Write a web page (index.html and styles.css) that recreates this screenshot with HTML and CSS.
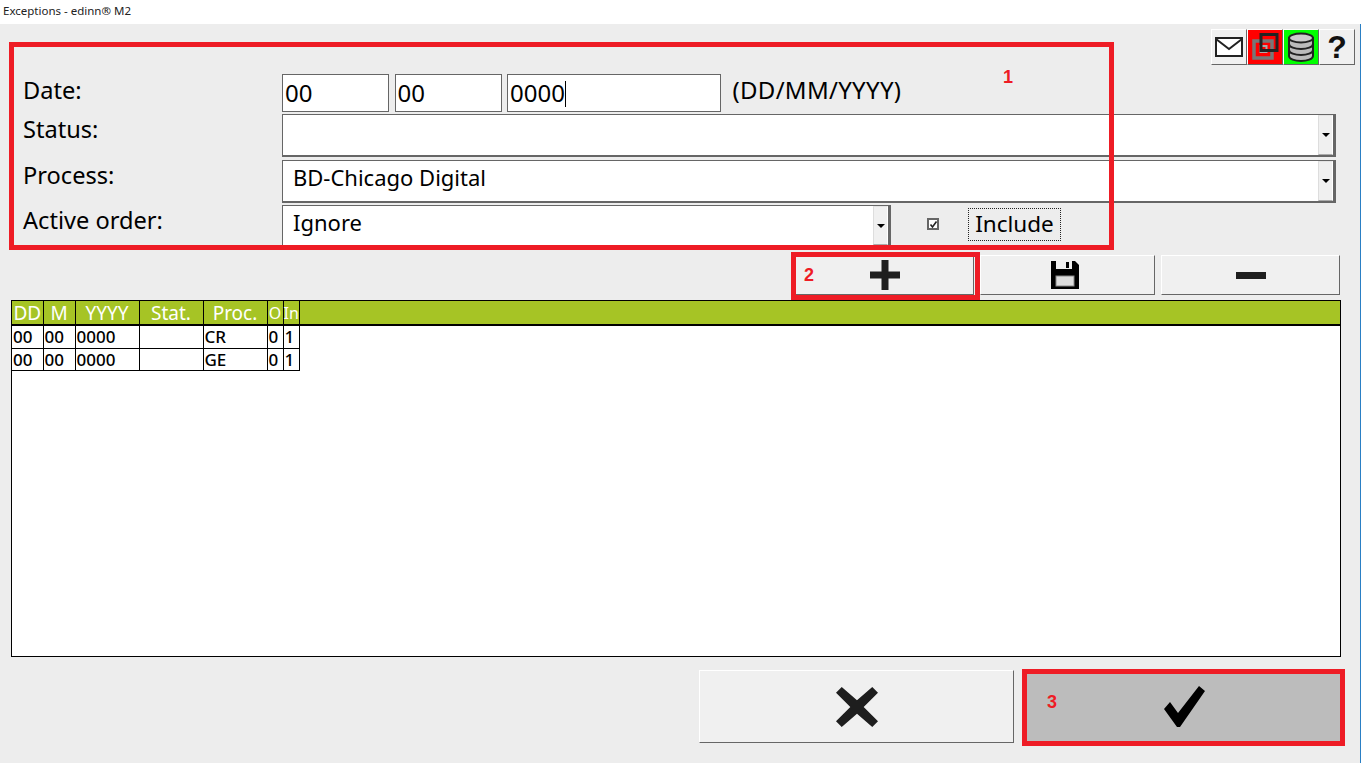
FILE: index.html
```html
<!DOCTYPE html>
<html lang="en">
<head>
<meta charset="utf-8">
<title>Exceptions - edinn® M2</title>
<link rel="stylesheet" href="styles.css">
</head>
<body>
<header class="titlebar">Exceptions - edinn® M2</header>
<main class="window">
  <div class="toolbar">
    <button class="tool"><svg width="30" height="24" viewBox="0 0 30 24"><rect x="2" y="3" width="26" height="18" fill="#fff" stroke="#222" stroke-width="2"/><path d="M2 4 15 14 28 4" fill="none" stroke="#222" stroke-width="2"/></svg></button>
    <button class="tool tool-red"><svg width="34" height="34" viewBox="0 0 34 34"><rect x="6" y="11" width="18" height="17" fill="none" stroke="#777" stroke-width="3.500"/><rect x="12.500" y="16" width="6" height="6" fill="none" stroke="#aaa" stroke-width="2"/><rect x="13" y="4.500" width="16" height="16" fill="none" stroke="#222" stroke-width="3"/></svg></button>
    <button class="tool tool-green"><svg width="30" height="32" viewBox="0 0 30 32"><path d="M3 7V25C3 28 9 30 15 30S27 28 27 25V7Z" fill="#bbb" stroke="#222" stroke-width="2"/><ellipse cx="15" cy="7" rx="12" ry="4.500" fill="#ccc" stroke="#222" stroke-width="2"/><path d="M3 13C3 16 9 18 15 18S27 16 27 13M3 19C3 22 9 24 15 24S27 22 27 19" fill="none" stroke="#222" stroke-width="2"/></svg></button>
    <button class="tool tool-help">?</button>
  </div>

  <form class="form">
    <div class="row row-date">
      <label class="label">Date:</label>
      <input class="field field-s" value="00">
      <input class="field field-s" value="00">
      <span class="field field-l">0000<i class="caret"></i></span>
      <span class="hint">(DD/MM/YYYY)</span>
    </div>
    <div class="row row-status">
      <label class="label">Status:</label>
      <div class="combo combo-wide"><span class="combo-text"></span><span class="arrow"></span></div>
    </div>
    <div class="row row-process">
      <label class="label">Process:</label>
      <div class="combo combo-wide"><span class="combo-text">BD-Chicago Digital</span><span class="arrow"></span></div>
    </div>
    <div class="row row-active">
      <label class="label">Active order:</label>
      <div class="combo combo-narrow"><span class="combo-text">Ignore</span><span class="arrow"></span></div>
      <span class="check"><svg width="9" height="9" viewBox="0 0 9 9"><path d="M1.500 4.500 3.500 7 7.500 1.500" fill="none" stroke="#222" stroke-width="1.600"/></svg></span>
      <span class="include">Include</span>
    </div>
  </form>

  <div class="actions">
    <button class="btn btn-add"><svg width="30" height="30" viewBox="0 0 30 30"><path d="M11.500 0h7v11.500H30v7H18.500V30h-7V18.500H0v-7h11.500Z" fill="#1e1e1e"/></svg></button>
    <button class="btn btn-save"><svg width="28" height="28" viewBox="0 0 28 28"><path d="M0 0H24L28 4V28H0Z" fill="#000"/><rect x="5" y="0" width="16" height="8" fill="#eee"/><rect x="15" y="1" width="3" height="6" fill="#000"/><rect x="5" y="15" width="18" height="10" fill="#ddd" stroke="#888"/></svg></button>
    <button class="btn btn-minus"><svg width="30" height="7" viewBox="0 0 30 7"><rect width="30" height="7" fill="#1e1e1e"/></svg></button>
  </div>

  <section class="grid-box">
    <table class="grid">
      <thead>
        <tr><th class="c-dd">DD</th><th class="c-m">M</th><th class="c-y">YYYY</th><th class="c-s">Stat.</th><th class="c-p">Proc.</th><th class="c-o">O</th><th class="c-i">In</th></tr>
      </thead>
      <tbody>
        <tr class="row-first"><td>00</td><td>00</td><td>0000</td><td></td><td>CR</td><td>0</td><td>1</td></tr>
        <tr><td>00</td><td>00</td><td>0000</td><td></td><td>GE</td><td>0</td><td>1</td></tr>
      </tbody>
    </table>
  </section>

  <div class="footer">
    <button class="btn btn-cancel"><svg width="44" height="42" viewBox="0 0 44 44"><path d="M6 1 22 15 38 1 44 7 29 22 44 37 38 43 22 29 6 43 0 37 15 22 0 7Z" fill="#1e1e1e"/></svg></button>
    <button class="btn btn-ok"><svg width="42" height="42" viewBox="0 0 42 42"><path d="M36 0 42 5 17 41 14 41 1 23 7 16 15 27Z" fill="#000"/></svg></button>
  </div>

  <div class="mark mark-1"></div><span class="num num-1">1</span>
  <div class="mark mark-2"></div><span class="num num-2">2</span>
  <div class="mark mark-3"></div><span class="num num-3">3</span>
</main>
</body>
</html>
```
FILE: styles.css
```css
* { box-sizing: border-box; }
html, body { margin: 0; height: 100%; }
body { background: #ededed; font-family: "Noto Sans", Tahoma, sans-serif; color: #000; overflow: hidden; }
.titlebar { height: 24px; background: #fff; font-size: 11.500px; line-height: 22px; padding-left: 3px; color: #222; }
.window { position: relative; height: 739px; padding: 5px 20px 0 11px; border-right: 1px solid #2a7fc4; }

.toolbar { display: flex; justify-content: flex-end; height: 36px; margin-right: -15px; }
.tool { width: 36px; height: 36px; padding: 0; background: #f0f0f0; border: 1px solid; border-color: #fff #666 #666 #fff; display: flex; align-items: center; justify-content: center; }
.tool-red { background: #f00; }
.tool-green { background: #0f0; }
.tool-help { font: bold 32px/1 "Liberation Sans", sans-serif; color: #111; }

.form { margin-top: 9px; }
.row { display: flex; align-items: flex-start; }
.label { width: 271px; flex: none; padding-left: 12px; font-size: 23.600px; line-height: 30px; }
.row-date { height: 40px; gap: 5.500px; }
.row-date .label { margin-right: -5.500px; padding-top: 1px; }
.field { height: 38px; background: #fff; border: 1px solid #666; font: 24px/35px "Noto Sans", sans-serif; padding: 0 2px 1px; color: #000; }
.field-s { width: 107px; }
.field-l { width: 214px; display: block; }
.caret { display: inline-block; width: 1px; height: 26px; background: #000; vertical-align: -5px; }
.hint { font-size: 24px; line-height: 32px; margin-left: 6px; letter-spacing: .3px; color: #000; }
.row-status { height: 46px; }
.row-process { height: 45px; }
.row-active { height: 50px; }
.combo { display: flex; background: #fff; border: 2px solid #666; border-width: 1px 3px 2px 1px; height: 43px; }
.combo-wide { width: 1054px; }
.combo-narrow { width: 609px; height: 42px; }
.combo-text { flex: 1; font-size: 22px; line-height: 32px; padding-left: 10px; }
.arrow { width: 15px; background: #f0f0f0; border: 1px solid #fff; border-color: #e4e4e4 #fff #aaa #ddd; position: relative; }
.arrow::after { content: ""; position: absolute; left: 3px; top: 50%; border: 4px solid transparent; border-top: 4px solid #000; border-bottom: 0; margin-top: -2px; }
.check { width: 12px; height: 12px; margin: 13px 0 0 36px; background: #fff; border: 2px solid #666; display: flex; align-items: center; justify-content: center; }
.check svg { flex: none; }
.include { width: 93px; height: 33px; margin: 3px 0 0 29px; border: 1px dotted #222; font-size: 22.500px; line-height: 30px; text-align: center; }

.actions { display: flex; justify-content: flex-end; gap: 6px; height: 40px; }
.btn { padding: 0; background: #f0f0f0; border: 1px solid; border-color: #fff #666 #666 #fff; display: flex; align-items: center; justify-content: center; }
.btn-add { width: 182px; padding-left: 4px; }
.btn-save { width: 175px; padding-right: 5px; }
.btn-minus { width: 179px; }

.grid-box { margin: 5px -1px 0 0; height: 357px; background: linear-gradient(#a6c425 0 23px, #000 23px 25px, #fff 25px); border: 1px solid #000; }
.grid { border-collapse: collapse; table-layout: fixed; width: 287px; }
.grid th { background: #a6c425; color: #fff; font: 400 19px/22px "Noto Sans", sans-serif; padding: 0; height: 24px; border-right: 1px solid #000; border-bottom: 2px solid #000; }
.grid th.c-o, .grid th.c-i { font-size: 16px; }
.grid td { font: 500 17px/21px "Noto Sans", sans-serif; padding: 0 0 0 1px; height: 22px; border: 1px solid #000; border-left: 0; overflow: hidden; white-space: nowrap; }
.row-first td { height: 23px; }
.c-dd { width: 31px; }
.c-m { width: 32px; }
.c-y, .c-s, .c-p { width: 64px; }
.c-o, .c-i { width: 16px; }

.footer { display: flex; justify-content: flex-end; gap: 10px; margin: 13px -3px 0 0; height: 73px; }
.btn-cancel { width: 315px; }
.btn-ok { width: 319px; background: #bcbcbc; border: 0; }

.mark { position: absolute; border: 5px solid #ee1c25; pointer-events: none; }
.mark-1 { left: 9px; top: 18px; width: 1105px; height: 208px; }
.mark-2 { left: 791px; top: 228px; width: 189px; height: 48px; }
.mark-3 { left: 1022px; top: 645px; width: 323px; height: 77px; }
.num { position: absolute; color: #ee1c25; font: bold 18px/20px "Liberation Sans", sans-serif; }
.num-1 { left: 1003px; top: 43px; }
.num-2 { left: 804px; top: 241px; }
.num-3 { left: 1047px; top: 668px; }
```
